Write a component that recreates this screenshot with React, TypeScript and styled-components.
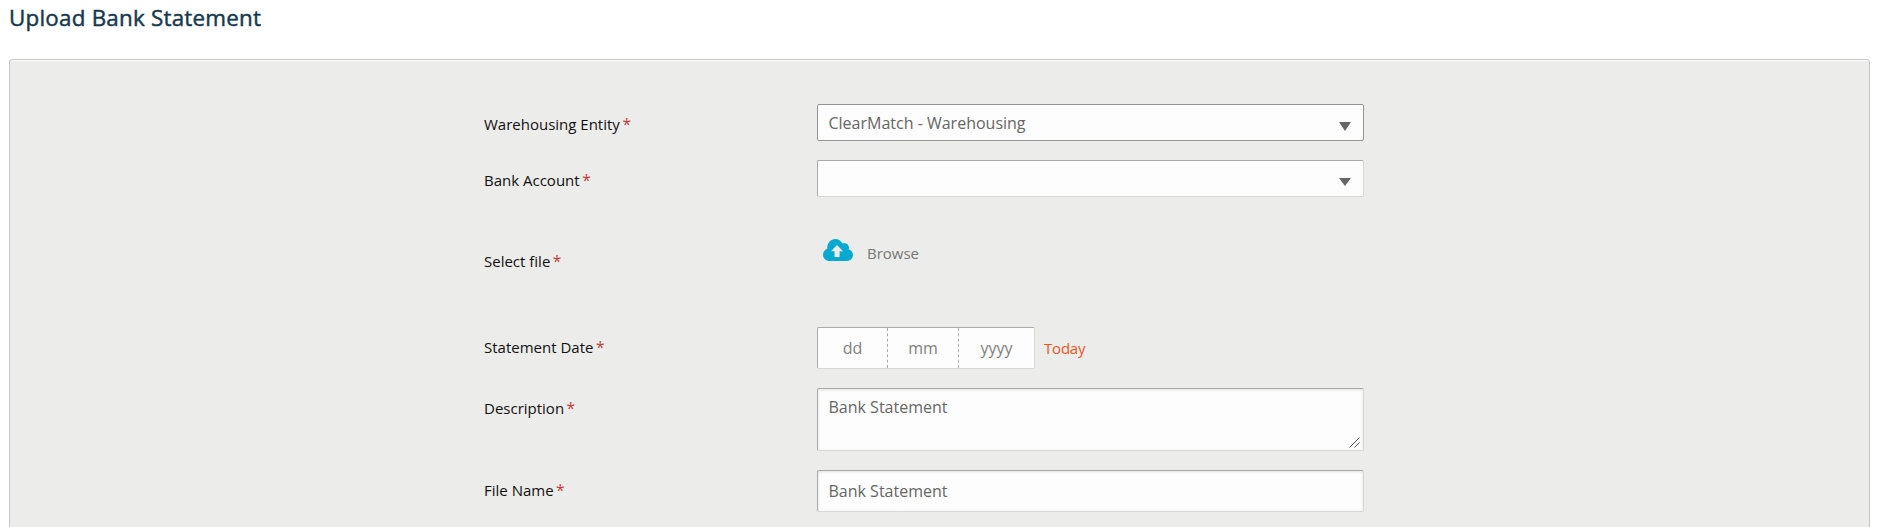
import styled, { createGlobalStyle } from "styled-components";

const GlobalStyle = createGlobalStyle`
  * {
    box-sizing: border-box;
  }

  body {
    margin: 0;
    background-color: #fff;
    font-family: "Open Sans", sans-serif;
    overflow: hidden;
  }
`;

const Page = styled.main`
  height: 527px;
  padding: 0 10px 0 9px;
  overflow: hidden;
`;

const Title = styled.h1`
  height: 59px;
  margin: 0;
  padding-top: 3px;
  font-size: 22.4px;
  font-weight: 500;
  line-height: 30px;
  letter-spacing: 0.22px;
  color: #17384d;
  -webkit-text-stroke: 0.45px #17384d;
`;

const Panel = styled.form`
  display: flex;
  flex-direction: column;
  height: 520px;
  padding: 44px 0 0 474px;
  background-color: #ececea;
  border: 1px solid #c6c6c8;
  border-radius: 3px;
  box-shadow: inset 0 1px 0 #fff;
`;

const Row = styled.div<{ $gap: number }>`
  display: grid;
  grid-template-columns: 333px 547px;
  align-items: start;
  margin-bottom: ${({ $gap }) => $gap}px;
`;

const Label = styled.label<{ $top: number }>`
  display: flex;
  gap: 3px;
  padding-top: ${({ $top }) => $top}px;
  font-size: 15px;
  line-height: 20px;
  color: #111;
`;

const Required = styled.span`
  margin-left: -0.5px;
  font-size: 15.5px;
  color: #c53a3a;
`;

const SelectBox = styled.div<{ $active?: boolean }>`
  display: flex;
  align-items: center;
  justify-content: space-between;
  height: 37px;
  padding: 0 12px 0 10.5px;
  background-color: #fdfdfd;
  border: 1px solid;
  border-color: ${({ $active }) => ($active ? "#949494" : "#aaa #d8d8d8 #d8d8d8 #aaa")};
  border-radius: 2px;
  font-size: 16px;
  color: #666;
`;

const Arrow = styled.svg<{ $height: number }>`
  width: 12px;
  height: ${({ $height }) => $height}px;
  margin: 17px 0 0 auto;
  align-self: flex-start;
  fill: #666;
`;

const TextInput = styled.input`
  width: 547px;
  height: 42px;
  padding: 0 10.5px;
  background-color: #fdfdfd;
  border: 1px solid;
  border-color: #aaa #d8d8d8 #d8d8d8 #aaa;
  border-radius: 2px;
  box-shadow: inset 0 1px 3px rgba(0, 0, 0, 0.12);
  font-family: inherit;
  font-size: 16px;
  color: #666;
  outline: none;
`;

const TextAreaWrap = styled.div`
  position: relative;
  height: 63px;
`;

const TextArea = styled.textarea`
  display: block;
  width: 547px;
  height: 63px;
  padding: 7px 10.5px;
  background-color: #fdfdfd;
  border: 1px solid;
  border-color: #aaa #d8d8d8 #d8d8d8 #aaa;
  border-radius: 2px;
  box-shadow: inset 0 1px 3px rgba(0, 0, 0, 0.12);
  font-family: inherit;
  font-size: 16px;
  line-height: 22px;
  color: #666;
  outline: none;
  resize: none;
`;

const ResizeGrip = styled.svg`
  position: absolute;
  right: 4px;
  bottom: 3px;
  width: 11px;
  height: 11px;
  fill: none;
  stroke: #555;
`;

const BrowseButton = styled.button`
  display: flex;
  align-items: center;
  gap: 14px;
  height: 30px;
  padding: 0 6px;
  background: none;
  border: none;
  font-family: inherit;
  font-size: 15px;
  color: #777;
`;

const CloudIcon = styled.svg`
  width: 30px;
  height: 22px;
  margin-bottom: 6px;
  fill: #08a9d1;
`;

const DateField = styled.div`
  display: flex;
  align-items: center;
`;

const DateParts = styled.div`
  display: flex;
  width: 218px;
  height: 42px;
  background-color: #fdfdfd;
  border: 1px solid;
  border-color: #aaa #d8d8d8 #d8d8d8 #aaa;
  border-radius: 2px;
`;

const DatePart = styled.input<{ $width: number }>`
  width: ${({ $width }) => $width}px;
  height: 100%;
  padding: 0;
  background: none;
  border: none;
  border-right: 1px dashed #aaa;
  font-family: inherit;
  font-size: 16px;
  text-align: center;
  outline: none;

  &:last-child {
    border-right: none;
  }

  &::placeholder {
    color: #808080;
  }
`;

const TodayLink = styled.a`
  margin: 0 0 0 9px;
  font-size: 15px;
  line-height: 20px;
  letter-spacing: -0.2px;
  color: #ea561d;
`;

const SelectArrow = ({ height = 8 }: { height?: number }) => (
  <Arrow $height={height} viewBox="0 0 12 9" preserveAspectRatio="none">
    <path d="M0 0h12L6 9z" />
  </Arrow>
);

const CloudUpload = () => (
  <CloudIcon viewBox="0 0 30 22">
    <path d="M6.5 22C2.8 22 0 19.2 0 15.7c0-2.8 1.7-5 4.2-6C4 4.2 7.6 0 12.2 0c3.3 0 6 1.8 7.3 4.6 3.2-1.4 6.7.9 6.5 4.4 0 .5-.1 1-.3 1.4 2.5.6 4.3 2.7 4.3 5.4 0 3.5-2.700 6.200-6.200 6.200z" />
    <path fill="#ececea" d="M14 6l6 6.3h-3.4V18h-5.1v-5.7H8z" />
  </CloudIcon>
);

type FieldLabelProps = {
  text: string;
  top: number;
};

const FieldLabel = ({ text, top }: FieldLabelProps) => (
  <Label $top={top}>
    {text}
    <Required>*</Required>
  </Label>
);

const App = () => {
  return (
    <>
      <GlobalStyle />
      <Page>
        <Title>Upload Bank Statement</Title>
        <Panel>
          <Row $gap={19}>
            <FieldLabel text="Warehousing Entity" top={10} />
            <SelectBox $active>
              ClearMatch - Warehousing
              <SelectArrow height={9} />
            </SelectBox>
          </Row>
          <Row $gap={41}>
            <FieldLabel text="Bank Account" top={10} />
            <SelectBox>
              <SelectArrow />
            </SelectBox>
          </Row>
          <Row $gap={56}>
            <FieldLabel text="Select file" top={13} />
            <BrowseButton type="button">
              <CloudUpload />
              Browse
            </BrowseButton>
          </Row>
          <Row $gap={19}>
            <FieldLabel text="Statement Date" top={10} />
            <DateField>
              <DateParts>
                <DatePart $width={70} placeholder="dd" />
                <DatePart $width={71} placeholder="mm" />
                <DatePart $width={75} placeholder="yyyy" />
              </DateParts>
              <TodayLink>Today</TodayLink>
            </DateField>
          </Row>
          <Row $gap={19}>
            <FieldLabel text="Description" top={10} />
            <TextAreaWrap>
              <TextArea defaultValue="Bank Statement" />
              <ResizeGrip viewBox="0 0 11 11">
                <path d="M.5 10.5l10-10M5.5 10.5l5-5" />
              </ResizeGrip>
            </TextAreaWrap>
          </Row>
          <Row $gap={19}>
            <FieldLabel text="File Name" top={10} />
            <TextInput defaultValue="Bank Statement" />
          </Row>
        </Panel>
      </Page>
    </>
  );
};

export default App;
